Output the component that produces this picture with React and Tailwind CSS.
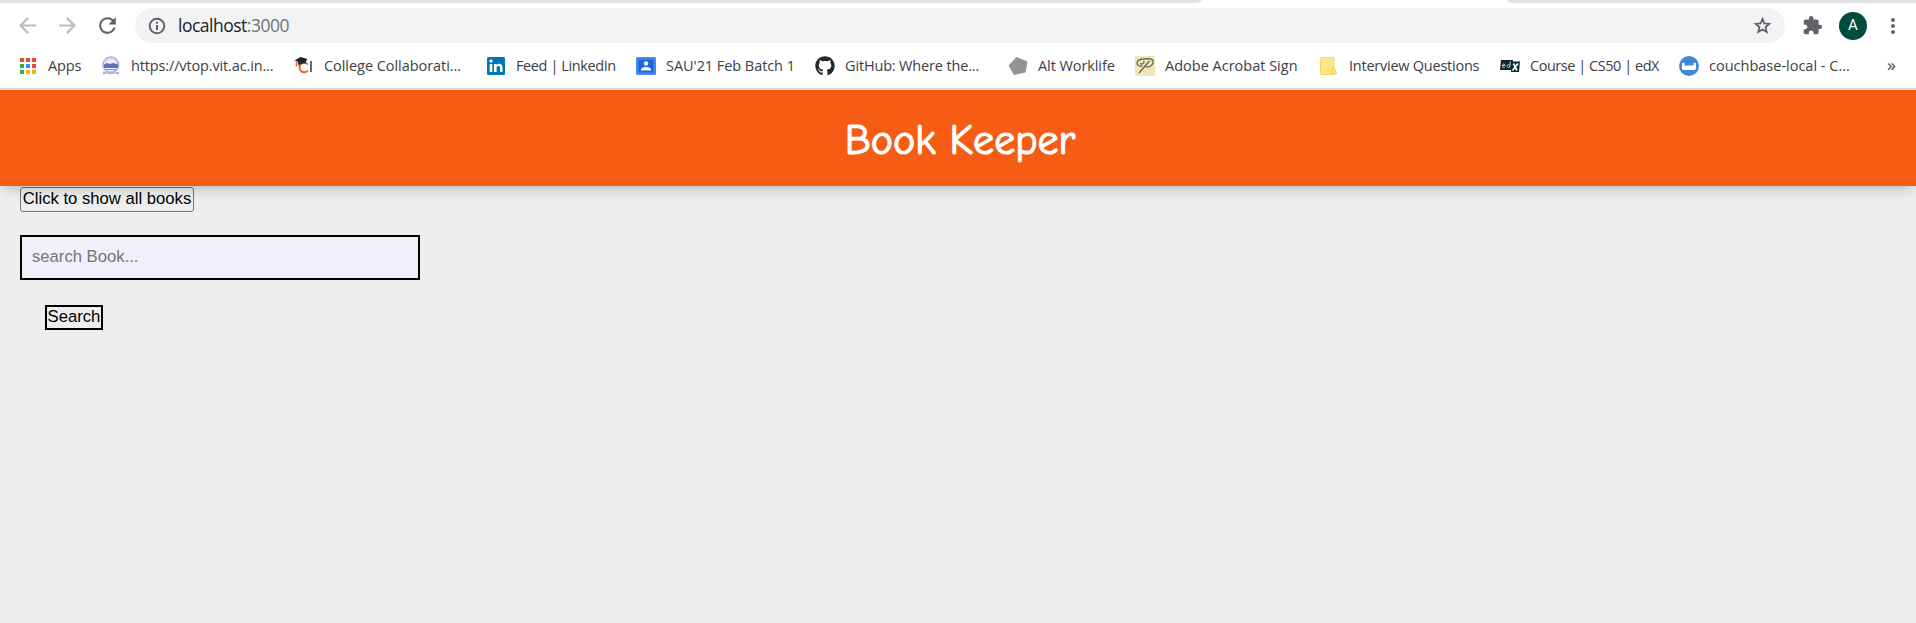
import React from 'react';
import { MdRefresh, MdExtension, MdMoreVert } from 'react-icons/md';
import { FaGithub } from 'react-icons/fa';

const box = 'h-5 w-5 shrink-0';

const BackIcon = () => (
  <svg className="ml-[15px] h-[25px] w-[25px]" viewBox="0 0 24 24" fill="none" stroke="#babcbe" strokeWidth="2.100">
    <path d="M20 12H5.500M12.600 4.700L5.300 12l7.300 7.300" />
  </svg>
);

const ForwardIcon = () => (
  <svg className="ml-[15px] h-[25px] w-[25px]" viewBox="0 0 24 24" fill="none" stroke="#babcbe" strokeWidth="2.100">
    <path d="M4 12h14.500M11.400 4.700l7.300 7.300-7.300 7.300" />
  </svg>
);

const InfoIcon = () => (
  <svg className="ml-[12px] h-5 w-5" viewBox="0 0 20 20" fill="none" stroke="currentColor" strokeWidth="2">
    <circle cx="10" cy="10" r="7.300" />
    <path d="M10 9v5M10 5.800v2" />
  </svg>
);

const StarIcon = () => (
  <svg className="mr-[12px] ml-auto h-[21px] w-[21px]" viewBox="0 0 24 24" fill="none" stroke="currentColor" strokeWidth="2">
    <path d="M12 4.500l2.200 5.200 5.600.500-4.300 3.700 1.300 5.500-4.800-2.900-4.800 2.900 1.300-5.500-4.300-3.700 5.600-.500z" />
  </svg>
);

const AppsIcon = () => (
  <svg className={box} viewBox="0 0 20 20">
    <g fill="#f44336"><rect x="2" y="2" width="4" height="4" /><rect x="8" y="2" width="4" height="4" /><rect x="14" y="2" width="4" height="4" /><rect x="14" y="8" width="4" height="4" /></g>
    <g fill="#34a853"><rect x="2" y="8" width="4" height="4" /><rect x="2" y="14" width="4" height="4" /></g>
    <rect x="8" y="8" width="4" height="4" fill="#2196f3" />
    <g fill="#fbb300"><rect x="8" y="14" width="4" height="4" /><rect x="14" y="14" width="4" height="4" /></g>
  </svg>
);

const CrestIcon = () => (
  <svg className={box} viewBox="0 0 20 20" fill="none">
    <circle cx="9.800" cy="8.800" r="7.800" fill="#eef1fa" stroke="#a3b1da" strokeWidth="1.500" />
    <path d="M4.500 7.500a5.500 4.500 0 0 1 11 0" stroke="#c3cce8" />
    <path d="M3 8.500l3-1.500 3 1 3-1 5 1.500v3.500H3z" fill="#5872b8" />
    <path d="M5 13.500h10" stroke="#8496cc" strokeWidth="1" />
    <path d="M2 15.500l4 1 4-1 4 1 4-1v3l-4-1-4 1-4-1-4 1z" fill="#a5b3db" />
  </svg>
);

const CollegeIcon = () => (
  <svg className={box} viewBox="0 0 20 20" fill="none">
    <path d="M14 8.500a4.800 4.800 0 1 0 0 6" stroke="#f2691e" strokeWidth="1.900" />
    <path d="M.500 4.500L6.500 1l7 2-3 4.500z" fill="#222" />
    <path d="M3.500 5l1 4.500c1.500-1.500 4-2.500 7.500-2.500V3.500z" fill="#292929" />
    <path d="M2.500 5.500v5" stroke="#f2691e" strokeWidth="1.500" />
    <path d="M17 5v11" stroke="#444" strokeWidth="1.600" />
  </svg>
);

const LinkedInIcon = () => (
  <svg className={box} viewBox="0 0 20 20">
    <rect x="1" y="1" width="18" height="18" rx="1.500" fill="#0077b5" />
    <circle cx="5" cy="5" r="1.600" fill="#fff" />
    <path d="M3.700 8h2.600v8H3.700zM8 8h2.500v1.200c1.500-2.200 6-1.900 6 2.300V16H14v-4.200c0-2.400-3.400-2.200-3.400 0V16H8z" fill="#fff" />
  </svg>
);

const ClassroomIcon = () => (
  <svg className={box} viewBox="0 0 20 20">
    <rect x="0" y="1" width="20" height="18" rx="1.500" fill="#4688f4" />
    <rect x="2.500" y="3.500" width="15" height="13" fill="#1d65da" />
    <circle cx="10" cy="7.500" r="2.200" fill="#fff" />
    <path d="M5 14.500v-1.500c1-2.700 9-2.700 10 0v1.500z" fill="#fff" />
  </svg>
);

const PentagonIcon = () => (
  <svg className={box} viewBox="0 0 20 20">
    <path d="M8.500 1L19.500 5.500 17.500 16.500 6 19 .500 9.500z" fill="#939498" />
  </svg>
);

const SignIcon = () => (
  <svg className={box} viewBox="0 0 20 20" fill="none">
    <rect width="20" height="20" fill="#f0e6bd" />
    <path d="M4 17L14.500 5M7.500 10C0 11.500 0 3 9 3c8-1 10.500 1 8.500 5-1.500 3-5 3.500-7 2.500M5 7.500c2 1.500 5-.500 3.500-2.500" stroke="#6b6350" strokeWidth="1.300" />
  </svg>
);

const NoteIcon = () => (
  <svg className={box} viewBox="0 0 20 20">
    <rect x="1.500" y="1.500" width="13.500" height="17" rx="1" fill="#ffe48a" stroke="#f9d55c" />
    <path d="M13 13.500a1.500 1.500 0 0 1 3 0v1.500a1.500 1.500 0 0 1 0 3h-3z" fill="#ffe07a" stroke="#f2c94c" />
  </svg>
);

const EdxIcon = () => (
  <svg className={box} viewBox="0 0 20 20">
    <path d="M1 4h12l-1 10H0zM12 5.500h8l-1 10.500h-8z" fill="#0c2a2e" />
    <g fill="none" stroke="#c3d0d2" strokeWidth="1"><path d="M2.500 9.500h2.500c0-2-2.500-2-2.500.500s2 1.800 2.500 1M10.500 5.500l-.800 6M9.500 8.500c-2.500-1-3.500 3-1 3l1.500-1" /></g>
    <path d="M13.500 7.500l3.500 7M18 7.500l-5.500 7" fill="none" stroke="#fff" strokeWidth="1.700" />
  </svg>
);

const CouchIcon = () => (
  <svg className={box} viewBox="0 0 20 20">
    <circle cx="10" cy="10" r="10" fill="#4287d6" />
    <path d="M3 8c0-1.700 2.500-1.700 2.500 0v1.500h9V8c0-1.700 2.500-1.700 2.500 0v4c0 1.500-.800 2-2 2H5c-1.200 0-2-.500-2-2z" fill="#fff" />
  </svg>
);

const bookmarks = [
  { icon: <AppsIcon />, label: 'Apps', cls: 'w-[83px]', track: 'tracking-[-0.1px]' },
  { icon: <CrestIcon />, label: 'https://vtop.vit.ac.in...', cls: 'w-[193px]', track: 'tracking-[-0.14px]' },
  { icon: <CollegeIcon />, label: 'College Collaborati...', cls: 'w-[192px]', track: 'tracking-[-0.05px]' },
  { icon: <LinkedInIcon />, label: 'Feed | LinkedIn', cls: 'w-[150px]', track: 'tracking-[-0.4px]' },
  { icon: <ClassroomIcon />, label: "SAU'21 Feb Batch 1", cls: 'w-[179px]', track: 'tracking-[-0.06px]' },
  { icon: <FaGithub className="h-5 w-5 shrink-0 text-[#24292e]" />, label: 'GitHub: Where the...', cls: 'w-[193px]', track: 'tracking-[-0.16px]' },
  { icon: <PentagonIcon />, label: 'Alt Worklife', cls: 'w-[127px]', track: 'tracking-[-0.08px]' },
  { icon: <SignIcon />, label: 'Adobe Acrobat Sign', cls: 'w-[184px]', track: '' },
  { icon: <NoteIcon />, label: 'Interview Questions', cls: 'w-[181px]', track: 'tracking-[-0.24px]' },
  { icon: <EdxIcon />, label: 'Course | CS50 | edX', cls: 'w-[179px]', track: 'tracking-[-0.46px]' },
  { icon: <CouchIcon />, label: 'couchbase-local - C...', cls: 'w-[200px]', track: '' },
];

export default function App() {
  return (
    <div className="flex h-[623px] w-[1916px] flex-col overflow-hidden bg-[#eeeeee] font-['Liberation_Sans',sans-serif]">
      <div className="flex h-[90px] shrink-0 flex-col border-b-2 border-[#dadce0] bg-white font-['Open_Sans',sans-serif]">
        <div className="flex h-[3px] shrink-0 justify-between">
          <svg className="h-[3px] w-[1202px]" viewBox="0 0 1202 3"><path d="M0 0h1202q-2 3-6 3H0z" fill="#dee1e6" /></svg>
          <svg className="h-[3px] w-[409px]" viewBox="0 0 409 3"><path d="M0 0h409v3H6Q2 3 0 0z" fill="#dee1e6" /></svg>
        </div>
        <div className="mt-[5px] flex h-[35px] shrink-0 items-center text-[#5f6368]">
          <BackIcon />
          <ForwardIcon />
          <MdRefresh className="ml-[15px] h-[25px] w-[25px]" />
          <div className="ml-[15px] flex h-[35px] w-[1650px] items-center rounded-full bg-[#f1f3f4]">
            <InfoIcon />
            <span className="ml-[11px] text-[17.5px] leading-none tracking-[-0.5px] text-[#202124]">localhost<span className="text-[#70757a]">:3000</span></span>
            <StarIcon />
          </div>
          <MdExtension className="ml-[17px] h-[21px] w-[21px]" />
          <div className="ml-[16px] flex h-7 w-7 items-center justify-center rounded-full bg-[#004d40] font-[Roboto,sans-serif] text-[15px] leading-none text-white">A</div>
          <MdMoreVert className="ml-[14px] h-[24px] w-[24px]" />
        </div>
        <div className="flex h-[45px] shrink-0 items-center pl-[18px] text-[14.500px] leading-none text-[#3c4043]">
          {bookmarks.map((b) => (
            <div key={b.label} className={`flex shrink-0 items-center gap-[10px] whitespace-nowrap ${b.cls}`}>
              {b.icon}
              <span className={`pt-[2px] ${b.track}`}>{b.label}</span>
            </div>
          ))}
          <span className="ml-[8px] pb-0.5 text-[16px] font-semibold text-[#5f6368]">»</span>
        </div>
      </div>

      <header className="z-10 flex h-24 shrink-0 items-center justify-center bg-[#f65c14] shadow-[0_6px_12px_-4px_rgba(0,0,0,0.25)]">
        <h1 className="pt-[6px] pl-1 font-['Comic_Sans_MS','Comic_Neue',Lato,sans-serif] text-[42px] leading-none text-white [-webkit-text-stroke:1.2px_white]">Book Keeper</h1>
      </header>

      <main className="flex flex-col items-start pl-5">
        <button className="mt-px flex h-[25px] w-[174px] justify-center rounded-[3px] border border-[#767676] text-[16.67px] leading-[22px] whitespace-nowrap text-black">Click to show all books</button>
        <input className="mt-[23px] h-[45px] w-[400px] border-2 border-black bg-[#f0effa] px-[10px] pb-[2px] text-[16.67px] text-black placeholder:text-[#757575]" placeholder="search Book..." />
        <button className="mt-[25px] ml-[25px] flex h-[25px] w-[58px] justify-center border-2 border-black text-[16.67px] leading-[20px] text-black">Search</button>
      </main>
    </div>
  );
}
